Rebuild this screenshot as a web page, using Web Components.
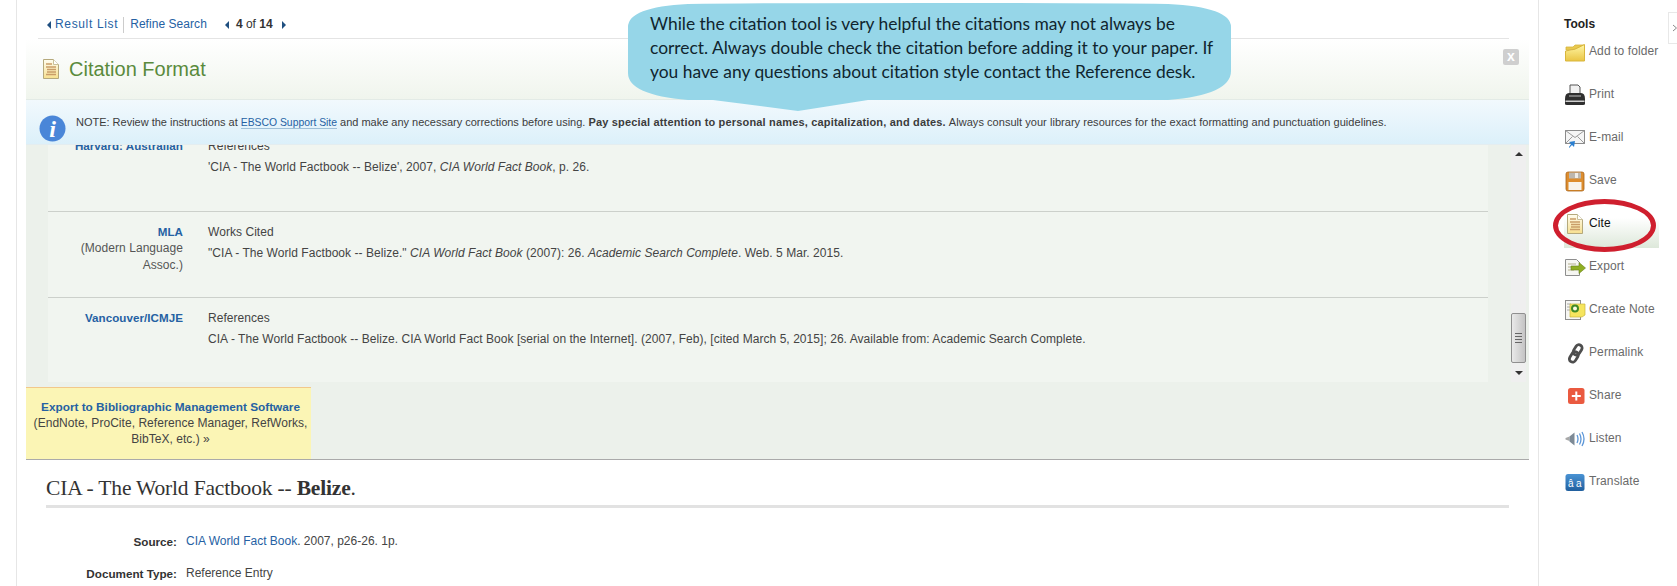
<!DOCTYPE html>
<html lang="en">
<head>
<meta charset="utf-8">
<title>Citation Format</title>
<style>
  html, body { margin: 0; padding: 0; background: #fff; overflow: hidden; }
  body { font: 12px/15px "Liberation Sans", Arial, sans-serif; color: #444; }
  i { font-style: italic; }
</style>
</head>
<body>
<ebsco-page>
  <callout-bubble slot="overlay">While the citation tool is very helpful the citations may not always be<br>correct. Always double check the citation before adding it to your paper. If<br>you have any questions about citation style contact the Reference desk.</callout-bubble>

  <result-nav></result-nav>
  <citation-panel>
    <citation-row label="Harvard: Australian">
      <p>References</p>
      <p>'CIA - The World Factbook -- Belize', 2007, <i>CIA World Fact Book</i>, p. 26.</p>
    </citation-row>
    <citation-row label="MLA" sub="(Modern Language Assoc.)">
      <p>Works Cited</p>
      <p>"CIA - The World Factbook -- Belize." <i>CIA World Fact Book</i> (2007): 26. <i>Academic Search Complete</i>. Web. 5 Mar. 2015.</p>
    </citation-row>
    <citation-row label="Vancouver/ICMJE">
      <p>References</p>
      <p>CIA - The World Factbook -- Belize. CIA World Fact Book [serial on the Internet]. (2007, Feb), [cited March 5, 2015]; 26. Available from: Academic Search Complete.</p>
    </citation-row>
  </citation-panel>
  <record-detail>
    <span slot="title">CIA - The World Factbook -- <b>Belize</b>.</span>
    <detail-row label="Source:"><a-link>CIA World Fact Book</a-link>. 2007, p26-26. 1p.</detail-row>
    <detail-row label="Document Type:">Reference Entry</detail-row>
  </record-detail>

  <tools-column slot="tools">
    <tool-item icon="folder">Add to folder</tool-item>
    <tool-item icon="print">Print</tool-item>
    <tool-item icon="mail">E-mail</tool-item>
    <tool-item icon="save">Save</tool-item>
    <tool-item icon="cite" circled>Cite</tool-item>
    <tool-item icon="export">Export</tool-item>
    <tool-item icon="note">Create Note</tool-item>
    <tool-item icon="link">Permalink</tool-item>
    <tool-item icon="share">Share</tool-item>
    <tool-item icon="listen">Listen</tool-item>
    <tool-item icon="translate">Translate</tool-item>
  </tools-column>
</ebsco-page>

<script>
const LINK_BLUE = "#2561a3";

const citeIcon = /* html */ `
  <svg width="22" height="22" viewBox="0 0 22 22">
    <defs><linearGradient id="d" x1="0" y1="0" x2="0" y2="1"><stop offset="0" stop-color="#fffdf0"/><stop offset="1" stop-color="#f7e08f"/></linearGradient></defs>
    <path d="M3.5 1.5h10l5 5v14h-15z" fill="url(#d)" stroke="#b5a97c"/>
    <path d="M13.5 1.5v5h5" fill="#fff" stroke="#c9c09a"/>
    <path d="M6 6h6M6 9h10M7 11.500h9M7 14h9M6 16.500h10" stroke="#c99d68" stroke-width="1.400"/>
  </svg>`;

const toolIcons = {
  folder: /* html */ `
    <svg width="22" height="22" viewBox="0 0 22 22">
      <defs><linearGradient id="f" x1="0" y1="0" x2="0" y2="1"><stop offset="0" stop-color="#fff7a6"/><stop offset="1" stop-color="#eac544"/></linearGradient></defs>
      <path d="M2 9V6h7l2-2h9v4z" fill="#e9c94f" stroke="#d6b53d" stroke-width=".8"/>
      <path d="M1.500 20V10Q11 9.500 20.500 3.500V20z" fill="url(#f)" stroke="#d9b63c"/>
    </svg>`,
  print: /* html */ `
    <svg width="22" height="22" viewBox="0 0 22 22">
      <path d="M6 1h8l2 2v8H6z" fill="#f1f1f1" stroke="#555"/>
      <path d="M1 15q0-6 4-6h12q4 0 4 6v5q0 1-2 1H3q-2 0-2-1z" fill="#2f2f2f"/>
      <path d="M5 11h12v2H5z" fill="#777"/>
      <path d="M1.500 16.500h19v1.500h-19z" fill="#cfcfcf"/>
    </svg>`,
  mail: /* html */ `
    <svg width="22" height="22" viewBox="0 0 22 22">
      <rect x="1.500" y="3.500" width="19" height="13" fill="#f5f5f5" stroke="#8b8b8b"/>
      <path d="M1.500 3.500l9.500 7 9.500-7M1.500 16.500l7-7M20.500 16.500l-7-7" fill="none" stroke="#9a9a9a"/>
      <path d="M5 20l2-3-2-2 6-1-1 6-2-2-3 3z" fill="#2a7fd0"/>
    </svg>`,
  save: /* html */ `
    <svg width="22" height="22" viewBox="0 0 22 22">
      <rect x="2" y="2" width="18" height="19" rx="2" fill="#dd8d2e" stroke="#a9641b" stroke-width=".8"/>
      <rect x="5" y="2.500" width="12" height="6" fill="#bdb7ae"/>
      <rect x="11" y="3" width="3" height="5" fill="#f0ede8"/>
      <rect x="4.500" y="12" width="13" height="8" fill="#f8f4ec"/>
    </svg>`,
  cite: citeIcon,
  export: /* html */ `
    <svg width="22" height="22" viewBox="0 0 22 22">
      <path d="M1.500 3.500h11l3 3v13h-14z" fill="#f6f6f2" stroke="#8e8e8e"/>
      <path d="M4 8h8M4 11h6M4 14h6" stroke="#b5b08f"/>
      <path d="M7 10h8V6.500l6.500 5.500-6.500 5.500V14H7z" fill="#8fae22" stroke="#66801a" stroke-width=".6"/>
    </svg>`,
  note: /* html */ `
    <svg width="22" height="22" viewBox="0 0 22 22">
      <rect x="1.500" y="1.500" width="15" height="19" fill="#f6f6f3" stroke="#8e8e8e"/>
      <path d="M3 5h4M3 8h4M3 11h4" stroke="#aaa"/>
      <path d="M6 5h15v11l-3 2H6z" fill="#f6e55e" stroke="#c9b53d" stroke-width=".7"/>
      <circle cx="11" cy="9.500" r="3" fill="#fdfbe0" stroke="#3f8a27" stroke-width="2"/>
    </svg>`,
  link: /* html */ `
    <svg width="22" height="22" viewBox="0 0 22 22">
      <g fill="none" stroke="#4e4e4e" stroke-width="2.800" transform="rotate(-58 12 11)">
        <rect x="2" y="8" width="11" height="6.500" rx="3.200"/>
        <rect x="10" y="7.500" width="11" height="6.500" rx="3.200"/>
      </g>
    </svg>`,
  share: /* html */ `
    <svg width="22" height="22" viewBox="0 0 22 22">
      <rect x="4" y="3" width="16.500" height="16" rx="2.500" fill="#ea5a40"/>
      <path d="M11.300 6.500h2v3.500h3.500v2h-3.500v3.500h-2V12H7.800v-2h3.500z" fill="#fff"/>
    </svg>`,
  listen: /* html */ `
    <svg width="22" height="22" viewBox="0 0 22 22">
      <path d="M1.500 10l4-1.500V13l-4-1.500z" fill="#a8a8a8"/>
      <path d="M5.500 8.500l5-4v13l-5-4z" fill="#7d8a96"/>
      <path d="M13 7q2 4 0 8M15.500 5.500q3 5.500 0 11M18 4q4 7 0 14" fill="none" stroke="#5d97d8" stroke-width="1.300"/>
    </svg>`,
  translate: /* html */ `
    <svg width="22" height="22" viewBox="0 0 22 22">
      <defs><linearGradient id="t" x1="0" y1="0" x2="0" y2="1"><stop offset="0" stop-color="#4a93d4"/><stop offset="1" stop-color="#205f9e"/></linearGradient></defs>
      <rect x="1.500" y="3" width="19" height="17" rx="2.500" fill="url(#t)"/>
      <text x="4" y="15.500" font-size="10" font-family="Liberation Sans" fill="#fff">â</text>
      <text x="12" y="15.500" font-size="10" font-family="Liberation Sans" fill="#fff">a</text>
    </svg>`,
};

const pageTemplate = document.createElement("template");
pageTemplate.innerHTML = /* html */ `
  <style>
    :host {
      display: flex;
      position: relative;
      width: 1677px;
      height: 586px;
      overflow: hidden;
    }
    .main {
      box-sizing: border-box;
      flex: none;
      width: 1523px;
      height: 586px;
      margin-left: 16px;
      padding: 0 9px;
      border-left: 1px solid #e6e6e6;
      border-right: 1px solid #e6e6e6;
    }
  </style>
  <div class="main"><slot></slot></div>
  <slot name="tools"></slot>
  <slot name="overlay"></slot>`;

class EbscoPage extends HTMLElement {
  constructor() {
    super();
    this.attachShadow({ mode: "open" });
    this.shadowRoot.appendChild(pageTemplate.content.cloneNode(true));
  }
}

const bubbleTemplate = document.createElement("template");
bubbleTemplate.innerHTML = /* html */ `
  <style>
    :host {
      display: block;
      position: absolute;
      left: 628px;
      top: 3px;
      width: 604px;
      height: 108px;
      color: #10252e;
      font: 17.400px/24px Lato, "Open Sans", sans-serif;
    }
    svg { position: absolute; left: 0; top: 0; }
    .text { position: relative; padding: 9px 0 0 22px; white-space: nowrap; }
  </style>
  <svg width="604" height="108" viewBox="0 0 604 108">
    <path d="M60 1Q130 0 300 0T540 1Q603 4 603 24V68Q603 92 540 97H240L170 108 85 97H60Q0 92 0 70V24Q0 4 60 1Z" fill="#96d6e8"/>
  </svg>
  <div class="text"><slot></slot></div>`;

class CalloutBubble extends HTMLElement {
  constructor() {
    super();
    this.attachShadow({ mode: "open" });
    this.shadowRoot.appendChild(bubbleTemplate.content.cloneNode(true));
  }
}

const navTemplate = document.createElement("template");
navTemplate.innerHTML = /* html */ `
  <style>
    :host {
      display: flex;
      align-items: center;
      box-sizing: border-box;
      height: 39px;
      margin: 0 20px 0 12px;
      padding: 11px 0 0 9px;
      border-bottom: 1px solid #e4e4e4;
      color: #333;
    }
    a { color: ${LINK_BLUE}; text-decoration: none; }
    .result { letter-spacing: .65px; }
    .refine { letter-spacing: .05px; }
    .tri { width: 0; height: 0; border: 4px solid transparent; border-left-width: 0; border-right: 4px solid #1f4f80; }
    .tri.next { border-right-width: 0; border-left: 4px solid #1f4f80; }
    .sep { width: 1px; height: 16px; background: #ccc; margin: 0 6px 0 5px; }
    .count { margin: 0 9px 0 7px; }
  </style>
  <span class="tri" style="margin-right:4px"></span><a class="result" href="#">Result List</a>
  <span class="sep"></span><a class="refine" href="#">Refine Search</a>
  <span class="tri" style="margin-left:18px"></span>
  <span class="count"><b>4</b> of <b>14</b></span>
  <span class="tri next"></span>`;

class ResultNav extends HTMLElement {
  constructor() {
    super();
    this.attachShadow({ mode: "open" });
    this.shadowRoot.appendChild(navTemplate.content.cloneNode(true));
  }
}

const panelTemplate = document.createElement("template");
panelTemplate.innerHTML = /* html */ `
  <style>
    :host { display: block; }
    .head {
      display: flex;
      box-sizing: border-box;
      height: 61px;
      padding: 0 10px 0 17px;
      background: linear-gradient(#fff, #f0f5ed);
      border-bottom: 1px solid #e3ebe6;
    }
    .doc { margin: 19px 0 0 -3px; }
    h2 {
      flex: 1;
      margin: 19px 0 0 7px;
      font: 20px/23px "Liberation Sans", Arial, sans-serif;
      color: #5a8a3c;
    }
    .close {
      width: 16px;
      height: 16px;
      margin-top: 10px;
      border-radius: 2px;
      background: #cfcfcf;
      color: #fff;
      font: bold 14px/15px "Liberation Sans", Arial, sans-serif;
      text-align: center;
    }
    .note {
      display: flex;
      box-sizing: border-box;
      height: 45px;
      padding-left: 13px;
      background: linear-gradient(#f2f9fd, #dcf0fa);
      border-bottom: 1px solid #e4edf0;
      font-size: 11px;
      color: #3c3c3c;
    }
    .info { flex: none; margin: 15px 10px 0 0; }
    .note p { margin: 15px 0 0; white-space: nowrap; letter-spacing: -.01px; }
    .note b { letter-spacing: .17px; }
    .note span { letter-spacing: .04px; }
    .note a { font-size: 10.400px; color: ${LINK_BLUE}; text-decoration: none; border-bottom: 1px solid #9fc0d8; }
    .body { background: #ecf1eb; height: 314px; }
    .scroll {
      display: flex;
      height: 237px;
      padding: 0 3px 0 22px;
    }
    .list { flex: none; width: 1440px; overflow: hidden; background: #f1f5f0; }
    .inner { margin-top: -19px; }
    .track {
      box-sizing: border-box;
      display: flex;
      flex-direction: column;
      align-items: center;
      justify-content: space-between;
      width: 15px;
      margin-left: 23px;
      background: #efefef;
    }
    .arrow { width: 0; height: 0; margin: 7px 0; border: 4px solid transparent; border-top: 0; border-bottom: 4px solid #333; }
    .arrow.down { border-bottom: 0; border-top: 4px solid #333; }
    .thumb {
      box-sizing: border-box;
      display: flex;
      flex-direction: column;
      justify-content: center;
      align-items: center;
      gap: 2px;
      width: 15px;
      height: 50px;
      margin-top: 149px;
      border: 1px solid #8f8f8f;
      border-radius: 2px;
      background: linear-gradient(90deg, #e9e9e9, #c4c4c4);
    }
    .thumb span { width: 7px; height: 1px; background: #666; }
    .export {
      box-sizing: border-box;
      width: 285px;
      height: 72px;
      margin-top: 5px;
      padding: 11px 0 0 4px;
      background: #fbf5b5;
      border-top: 1px solid #f2c88a;
      text-align: center;
      line-height: 16px;
      color: #444;
      letter-spacing: .04px;
      white-space: nowrap;
    }
    .export a { color: ${LINK_BLUE}; font-weight: bold; font-size: 11.800px; letter-spacing: 0; text-decoration: none; }
    .foot { height: 1px; background: #aaa; }
  </style>
  <div class="head">
    <span class="doc">${citeIcon}</span>
    <h2>Citation Format</h2>
    <div class="close">x</div>
  </div>
  <div class="note">
    <svg class="info" width="27" height="27" viewBox="0 0 27 27">
      <circle cx="13.500" cy="13.500" r="13" fill="#4a86d8"/>
      <text x="13.500" y="22" text-anchor="middle" font-family="Liberation Serif" font-style="italic" font-weight="bold" font-size="24" fill="#fff">i</text>
    </svg>
    <p>NOTE: Review the instructions at <a href="#">EBSCO Support Site</a> and make any necessary corrections before using. <b>Pay special attention to personal names, capitalization, and dates.</b> <span>Always consult your library resources for the exact formatting and punctuation guidelines.</span></p>
  </div>
  <div class="body">
    <div class="scroll">
      <div class="list"><div class="inner"><slot></slot></div></div>
      <div class="track">
        <span class="arrow"></span>
        <span class="thumb"><span></span><span></span><span></span><span></span></span>
        <span class="arrow down"></span>
      </div>
    </div>
    <div class="export"><a href="#">Export to Bibliographic Management Software</a><br>(EndNote, ProCite, Reference Manager, RefWorks,<br>BibTeX, etc.) &raquo;</div>
  </div>
  <div class="foot"></div>`;

class CitationPanel extends HTMLElement {
  constructor() {
    super();
    this.attachShadow({ mode: "open" });
    this.shadowRoot.appendChild(panelTemplate.content.cloneNode(true));
  }
}

const rowTemplate = document.createElement("template");
rowTemplate.innerHTML = /* html */ `
  <style>
    :host {
      display: grid;
      grid-template-columns: 135px 1fr;
      column-gap: 25px;
      box-sizing: border-box;
      height: 86px;
      padding-top: 13px;
      border-bottom: 1px solid #ccd0cb;
      letter-spacing: .05px;
      color: #444;
    }
    :host(:last-child) { border-bottom: 0; }
    .label { text-align: right; line-height: 17px; margin-top: -2px; color: #555; }
    .label b { display: block; color: ${LINK_BLUE}; font-size: 11.600px; }
    ::slotted(p) { margin: 0 0 6px; }
  </style>
  <div class="label"><b id="name"></b><span id="sub"></span></div>
  <div><slot></slot></div>`;

class CitationRow extends HTMLElement {
  constructor() {
    super();
    this.attachShadow({ mode: "open" });
    this.shadowRoot.appendChild(rowTemplate.content.cloneNode(true));
  }

  connectedCallback() {
    this.shadowRoot.getElementById("name").textContent = this.getAttribute("label");
    this.shadowRoot.getElementById("sub").textContent = this.getAttribute("sub") || "";
  }
}

const detailTemplate = document.createElement("template");
detailTemplate.innerHTML = /* html */ `
  <style>
    :host { display: block; margin: 0 20px; }
    h1 {
      margin: 0 0 17px;
      padding: 16px 0 5px;
      border-bottom: 3px solid #e2e2e2;
      font: normal 21.500px/24px "Liberation Serif", serif;
      letter-spacing: -.17px;
      color: #333;
    }
  </style>
  <h1><slot name="title"></slot></h1>
  <slot></slot>`;

class RecordDetail extends HTMLElement {
  constructor() {
    super();
    this.attachShadow({ mode: "open" });
    this.shadowRoot.appendChild(detailTemplate.content.cloneNode(true));
  }
}

const detailRowTemplate = document.createElement("template");
detailRowTemplate.innerHTML = /* html */ `
  <style>
    :host {
      display: grid;
      grid-template-columns: 131px 1fr;
      column-gap: 9px;
      align-items: center;
      height: 32px;
      color: #444;
    }
    b { text-align: right; color: #333; font-size: 11.700px; }
  </style>
  <b id="label"></b>
  <div><slot></slot></div>`;

class DetailRow extends HTMLElement {
  constructor() {
    super();
    this.attachShadow({ mode: "open" });
    this.shadowRoot.appendChild(detailRowTemplate.content.cloneNode(true));
  }

  connectedCallback() {
    this.shadowRoot.getElementById("label").textContent = this.getAttribute("label");
  }
}

class ALink extends HTMLElement {
  constructor() {
    super();
    this.attachShadow({ mode: "open" }).innerHTML = `<style>:host{color:${LINK_BLUE}}</style><slot></slot>`;
  }
}

const toolsTemplate = document.createElement("template");
toolsTemplate.innerHTML = /* html */ `
  <style>
    :host {
      display: block;
      position: relative;
      flex: 1;
      padding: 17px 0 0 25px;
    }
    h3 { margin: 0 0 1px; font: bold 12px/15px "Liberation Sans", Arial, sans-serif; color: #222; }
    .tab {
      position: absolute;
      left: 129px;
      top: 12px;
      width: 12px;
      height: 30px;
      border: 1px solid #e8e8e8;
    }
    .tab svg { display: block; margin: 11px 0 0 3px; }
  </style>
  <h3>Tools</h3>
  <slot></slot>
  <div class="tab">
    <svg width="6" height="8" viewBox="0 0 6 8"><path d="M1 1l3.500 3L1 7" fill="none" stroke="#888"/></svg>
  </div>`;

class ToolsColumn extends HTMLElement {
  constructor() {
    super();
    this.attachShadow({ mode: "open" });
    this.shadowRoot.appendChild(toolsTemplate.content.cloneNode(true));
  }
}

const toolTemplate = document.createElement("template");
toolTemplate.innerHTML = /* html */ `
  <style>
    :host {
      display: flex;
      position: relative;
      box-sizing: border-box;
      width: 95px;
      height: 43px;
      padding-top: 11px;
      color: #6a6a6a;
      letter-spacing: .1px;
    }
    :host([circled]) {
      color: #111;
      background: linear-gradient(#fff 30%, #dde8da);
    }
    .icon { flex: none; width: 22px; height: 22px; margin: -3px 3px 0 0; }
    .ring {
      display: none;
      position: absolute;
      left: -11px;
      top: -6px;
      width: 103px;
      height: 53px;
      box-sizing: border-box;
      border: 5px solid #cf1f2e;
      border-radius: 50%;
    }
    :host([circled]) .ring { display: block; }
  </style>
  <span class="icon" id="icon"></span>
  <slot></slot>
  <span class="ring"></span>`;

class ToolItem extends HTMLElement {
  constructor() {
    super();
    this.attachShadow({ mode: "open" });
    this.shadowRoot.appendChild(toolTemplate.content.cloneNode(true));
  }

  connectedCallback() {
    this.shadowRoot.getElementById("icon").innerHTML = toolIcons[this.getAttribute("icon")] || "";
  }
}

customElements.define("ebsco-page", EbscoPage);
customElements.define("callout-bubble", CalloutBubble);
customElements.define("result-nav", ResultNav);
customElements.define("citation-panel", CitationPanel);
customElements.define("citation-row", CitationRow);
customElements.define("record-detail", RecordDetail);
customElements.define("detail-row", DetailRow);
customElements.define("a-link", ALink);
customElements.define("tools-column", ToolsColumn);
customElements.define("tool-item", ToolItem);
</script>
</body>
</html>
